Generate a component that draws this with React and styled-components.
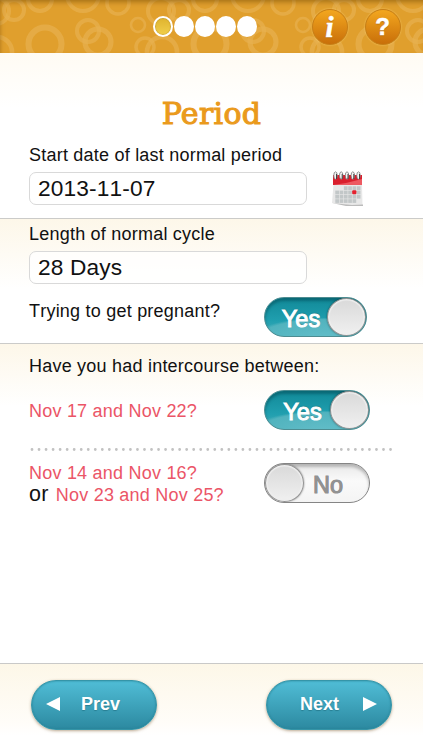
import React from 'react'
import styled, { createGlobalStyle } from 'styled-components'

const GlobalStyle = createGlobalStyle`
  * {
    box-sizing: border-box;
  }

  body {
    margin: 0;
    background: white;
    font-family: "Liberation Sans", Arial, sans-serif;
    color: #111;
    font-kerning: none;
  }
`

const Screen = styled.div`
  display: flex;
  flex-direction: column;
  width: 423px;
  height: 750px;
  overflow: hidden;
`

const Header = styled.header`
  position: relative;
  display: flex;
  align-items: center;
  height: 53px;
  flex-shrink: 0;
  padding-left: 152.5px;
  background: #e09f2d;
`

const Rings = styled.svg`
  position: absolute;
  inset: 0;
  width: 100%;
  height: 100%;
`

const HeaderShade = styled.div`
  position: absolute;
  inset: 0;
  box-shadow: inset 0 5px 5px -3px rgba(110, 70, 0, 0.5), inset 4px 0 5px -4px rgba(110, 70, 0, 0.4);
`

const Steps = styled.div`
  position: relative;
  display: flex;
  gap: 1.2px;
  width: 106px;
`

const Step = styled.span`
  width: 20px;
  height: 21px;
  border: 2px solid white;
  border-radius: 50%;
  background: ${props => props.$active ? 'linear-gradient(#dfb32e, #f1cf4c)' : 'white'};
  box-shadow: ${props => props.$active ? 'inset 0 0 1px 0.5px #b99431' : 'none'};
`

const RoundButton = styled.button`
  position: relative;
  width: 36px;
  height: 36px;
  margin: 0 0 0 ${props => props.$gap}px;
  padding: 0;
  border: 1px solid #c77f16;
  border-radius: 50%;
  background: linear-gradient(#f3a71f, #c96f09);
  box-shadow: 0 0 2px rgba(255, 216, 130, 0.7);
  color: white;
  font: ${props => props.$italic
    ? 'italic bold 29px/32px "Liberation Serif", serif'
    : 'bold 24px/34px "Liberation Sans", sans-serif'};
  text-shadow: 0 1px 1px #a86005;
  -webkit-text-stroke: 0.6px white;
`

const Section = styled.section`
  height: ${props => props.$height}px;
  flex-shrink: 0;
  padding: 0 29px;
  border-top: ${props => props.$first ? 'none' : '1px solid #cbcbc9'};
  background: linear-gradient(${props => props.$first ? '#fffbf3' : '#fdf7e9'}, #fff ${props => props.$fade}px);
`

const Title = styled.h1`
  margin: 0;
  padding-top: 42px;
  height: 92px;
  text-align: center;
  font: normal 30px/38px "DejaVu Serif", serif;
  letter-spacing: 0.3px;
  color: #ea9a1c;
  -webkit-text-stroke: 1.1px #ea9a1c;
`

const Label = styled.label`
  display: block;
  font-size: 18px;
  line-height: 20px;
  letter-spacing: 0.22px;
  white-space: nowrap;
`

const FieldRow = styled.div`
  display: flex;
  align-items: flex-start;
  gap: 25px;
  margin-top: ${props => props.$top}px;
`

const Field = styled.div`
  width: 278px;
  height: 33px;
  padding-left: 8px;
  border: 1px solid #d9d9d9;
  border-radius: 7px;
  background: rgba(255, 255, 255, 0.75);
  font-size: 22.7px;
  line-height: 31px;
  letter-spacing: 0.15px;
`

const CalendarSvg = styled.svg`
  width: 32px;
  height: 36px;
  margin-top: -1px;
`

const Row = styled.div`
  display: flex;
  justify-content: space-between;
  align-items: flex-start;
  margin-top: ${props => props.$top}px;
  padding-right: ${props => props.$right}px;
`

const Question = styled.p`
  margin: ${props => props.$top}px 0 0;
  font-size: 18px;
  line-height: 22px;
  letter-spacing: 0.22px;
  white-space: nowrap;
  color: ${props => props.$pink ? '#eb5567' : '#111'};
`

const Or = styled.span`
  margin-right: 2px;
  font-size: 21.5px;
  line-height: 20px;
  color: #111;
`

const SwitchTrack = styled.button`
  display: flex;
  flex-direction: ${props => props.$on ? 'row' : 'row-reverse'};
  align-items: center;
  width: ${props => props.$width}px;
  height: 40px;
  padding: 0;
  border: 1px solid ${props => props.$on ? '#4d8c91' : '#858585'};
  border-radius: 20px;
  overflow: hidden;
  background: ${props => props.$on
    ? 'radial-gradient(ellipse 80px 24px at 60px 42px, #64bec9 0, #51b3be 85%, transparent 94%), linear-gradient(#118998, #209faf 60%, #45adb9)'
    : 'linear-gradient(#e8e8e8, #fafafa 45%, #f4f4f4)'};
  box-shadow: inset 0 3px 3px ${props => props.$on ? 'rgba(0, 65, 75, 0.45)' : 'rgba(0, 0, 0, 0.22)'};
`

const SwitchText = styled.span`
  flex: 1;
  padding: ${props => props.$on ? '4px 0 0 10px' : '5px 26px 0 0'};
  text-align: ${props => props.$on ? 'center' : 'right'};
  font: normal 23.5px/27px "Liberation Sans", sans-serif;
  letter-spacing: 0;
  color: ${props => props.$on ? 'white' : '#929292'};
  -webkit-text-stroke: 1px ${props => props.$on ? 'white' : '#929292'};
  text-shadow: ${props => props.$on ? '0 -1px 1px #17727d' : '0 -0.5px 0 #888'};
`

const Knob = styled.span`
  width: 39px;
  height: 38px;
  flex-shrink: 0;
  border: 1.5px solid #929292;
  border-radius: 50%;
  background: linear-gradient(#d9d9d9, #f0f0f0);
  box-shadow: inset 0 0 1px 1.5px #eeeeee, 0 0 2px rgba(0, 0, 0, 0.5);
`

const Dots = styled.svg`
  display: block;
  width: 365px;
  height: 3px;
  margin-top: 18px;
`

const Footer = styled.footer`
  display: flex;
  justify-content: space-between;
  align-items: flex-start;
  height: 87px;
  padding: 16px 31px 0;
  border-top: 1px solid #c9c9c8;
  background: linear-gradient(#fdf7e8, #fffdf9 60px, #fff 72px);
`

const NavButton = styled.button`
  display: flex;
  align-items: center;
  justify-content: space-between;
  width: 126px;
  height: 50px;
  padding: ${props => props.$next ? '0 14px 2px 33px' : '0 36px 2px 14px'};
  border: 1px solid #3595a8;
  border-radius: 25px;
  background: linear-gradient(#50bdd6, #2c89a0);
  box-shadow: inset 0 0 2px #247d91, 0 1px 3px rgba(120, 85, 40, 0.5);
  color: white;
  font: bold 18px/22px "Liberation Sans", sans-serif;
  text-shadow: 0 1px 1px #287e92;
`

const NavArrow = styled.svg`
  width: 14px;
  height: 14px;
  fill: white;
`

// center x, center y, radius, stroke
const rings = [
  [14, 10, 10, 4],
  [40, -1, 12, 4],
  [83, -5, 16, 4],
  [118, 3, 11, 3.5],
  [161, 11, 13, 4],
  [-4, 11, 13, 4],
  [138, 25, 7, 2.5],
  [45, 44, 16.5, 6],
  [88, 31, 11, 4],
  [98, 42, 13, 5],
  [145, 47, 9, 3.5],
  [162, 52, 15, 4.5],
  [-3, 52, 15, 4.5]
]

const HeaderRings = () => (
  <Rings>
    <defs>
      <pattern id="rings" width="165" height="53" patternUnits="userSpaceOnUse">
        {rings.map(([cx, cy, r, width], index) => (
          <circle key={index} cx={cx} cy={cy} r={r} fill="none" stroke="#e8b251" strokeWidth={width} opacity="0.65"/>
        ))}
      </pattern>
    </defs>
    <rect width="423" height="53" fill="url(#rings)"/>
  </Rings>
)

const Calendar = () => (
  <CalendarSvg viewBox="0 0 32 36">
    <path d="M1.5 13H30L30.5 34L20 34.5L0 32Z" fill="#e8e8e8"/>
    <path d="M0 32L20 34L31 33.5V35H14Z" fill="#bbb"/>
    <path d="M1 4H30V14H1Z" fill="#d91f2d"/>
    <path d="M1 14L14 12L30 8V14Z" fill="#ed5961"/>
    {[17, 21.3, 25.6, 29.9].map((y, row) => (
      [5, 9.3, 13.6, 17.9, 22.2, 26.5].map((x, col) => (
        (row === 0 && col < 2) || (row === 3 && col > 4) ? null :
          <rect key={`${x}-${y}`} x={x - 1.7} y={y - 1.7} width="3.7" height="3.7" fill="#c2c7c8"/>
      ))
    ))}
    <rect x="20.2" y="19.2" width="4.2" height="4" rx="1" fill="#e5212e"/>
    {[3.5, 9.2, 15, 20.8, 26.5].map(x => (
      <g key={x}>
        <ellipse cx={x} cy="4.5" rx="1.7" ry="3.7" fill="#f5f5f5" stroke="#777" strokeWidth=".8"/>
        <path d={`M${x + 1} 3V8`} stroke="#444" strokeWidth="1"/>
      </g>
    ))}
  </CalendarSvg>
)

const Switch = ({ on, width = 106 }) => (
  <SwitchTrack $on={on} $width={width} role="switch" aria-checked={!!on}>
    <SwitchText $on={on}>{on ? 'Yes' : 'No'}</SwitchText>
    <Knob/>
  </SwitchTrack>
)

const App = () => {
  return (
    <>
      <GlobalStyle/>
      <Screen>
        <Header>
          <HeaderRings/>
          <HeaderShade/>
          <Steps>
            {[0, 1, 2, 3, 4].map(step => <Step key={step} $active={step === 0}/>)}
          </Steps>
          <RoundButton $gap={53} $italic>i</RoundButton>
          <RoundButton $gap={17}>?</RoundButton>
        </Header>
        <Section $first $height={165} $fade={55}>
          <Title>Period</Title>
          <Label>Start date of last normal period</Label>
          <FieldRow $top={7}>
            <Field>2013-11-07</Field>
            <Calendar/>
          </FieldRow>
        </Section>
        <Section $height={125} $fade={70}>
          <FieldRow $top={5}>
            <Label>Length of normal cycle</Label>
          </FieldRow>
          <FieldRow $top={7}>
            <Field>28 Days</Field>
          </FieldRow>
          <Row $top={13} $right={27}>
            <Question $top={3}>Trying to get pregnant?</Question>
            <Switch on width={103}/>
          </Row>
        </Section>
        <Section $height={320} $fade={62}>
          <FieldRow $top={12}>
            <Label>Have you had intercourse between:</Label>
          </FieldRow>
          <Row $top={14} $right={24}>
            <Question $pink $top={10}>Nov 17 and Nov 22?</Question>
            <Switch on/>
          </Row>
          <Dots>
            <path d="M3 1.5H365" stroke="#c2c2c2" strokeWidth="2.8" strokeLinecap="round" strokeDasharray="0 7.03"/>
          </Dots>
          <Row $top={12} $right={24}>
            <Question $pink $top={-1}>
              Nov 14 and Nov 16?<br/>
              <Or>or</Or> Nov 23 and Nov 25?
            </Question>
            <Switch/>
          </Row>
        </Section>
        <Footer>
          <NavButton>
            <NavArrow viewBox="0 0 14 14"><path d="M0 7L14 0V14Z"/></NavArrow>
            Prev
          </NavButton>
          <NavButton $next>
            Next
            <NavArrow viewBox="0 0 14 14"><path d="M14 7L0 0V14Z"/></NavArrow>
          </NavButton>
        </Footer>
      </Screen>
    </>
  )
}

export default App
